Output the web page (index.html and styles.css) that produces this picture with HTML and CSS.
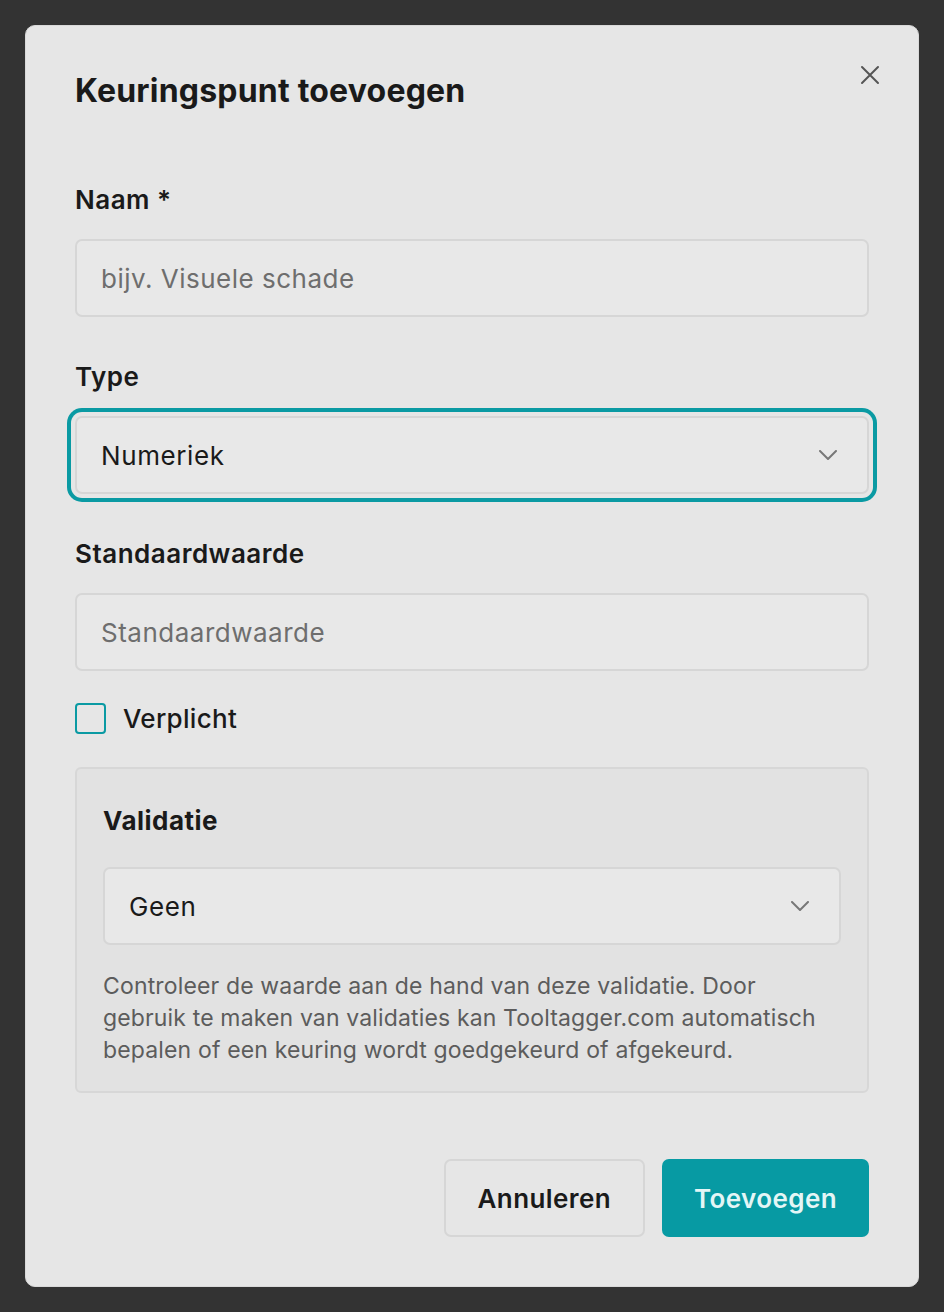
FILE: index.html
```html
<!DOCTYPE html>
<html lang="nl">
  <head>
    <meta charset="UTF-8" />
    <meta name="viewport" content="width=device-width, initial-scale=1.0" />
    <title>Keuringspunt toevoegen</title>
    <link rel="stylesheet" href="styles.css">
  </head>
  <body>
    <div class="overlay">
      <div class="modal">
        <div class="modal-header">
          <h2 class="modal-title">Keuringspunt toevoegen</h2>
          <button class="close" aria-label="Sluiten">
            <svg width="20" height="20" viewBox="0 0 20 20">
              <path d="M2 2 L18 18 M18 2 L2 18" stroke="#555" stroke-width="2" stroke-linecap="round" fill="none" />
            </svg>
          </button>
        </div>

        <div class="field">
          <label class="label" for="naam">Naam *</label>
          <input class="input" type="text" id="naam" placeholder="bijv. Visuele schade" />
        </div>

        <div class="field">
          <label class="label" for="type">Type</label>
          <div class="select focused">
            <span class="select-value">Numeriek</span>
            <svg class="chevron" width="18" height="10" viewBox="0 0 18 10">
              <path d="M1 1 L9 9 L17 1" stroke="#777" stroke-width="2" fill="none" stroke-linecap="round" stroke-linejoin="round" />
            </svg>
          </div>
        </div>

        <div class="field">
          <label class="label" for="standaard">Standaardwaarde</label>
          <input class="input" type="text" id="standaard" placeholder="Standaardwaarde" />
        </div>

        <label class="check-row">
          <span class="checkbox"></span>
          <span class="check-label">Verplicht</span>
        </label>

        <!-- Validatie blok -->
        <div class="panel">
          <div class="panel-title">Validatie</div>
          <div class="select">
            <span class="select-value">Geen</span>
            <svg class="chevron" width="18" height="10" viewBox="0 0 18 10">
              <path d="M1 1 L9 9 L17 1" stroke="#777" stroke-width="2" fill="none" stroke-linecap="round" stroke-linejoin="round" />
            </svg>
          </div>
          <p class="help">
            Controleer de waarde aan de hand van deze validatie. Door gebruik te maken van validaties kan Tooltagger.com automatisch bepalen of een keuring wordt goedgekeurd of afgekeurd.
          </p>
        </div>

        <div class="actions">
          <button class="btn btn-secondary">Annuleren</button>
          <button class="btn btn-primary">Toevoegen</button>
        </div>
      </div>
    </div>
  </body>
</html>
```

FILE: styles.css
```css
* {
  box-sizing: border-box;
}
html,
body {
  margin: 0;
  height: 100%;
}
body {
  background-color: #333333;
  font-family: Inter, "Noto Sans", sans-serif;
  color: #1a1a1a;
}
.overlay {
  padding: 25px;
}
.modal {
  background-color: #e6e6e6;
  border: 1px solid #d9d9d9;
  border-radius: 10px;
  padding: 47px 49px 49px 49px;
  height: 1262px;
}
.modal-header {
  display: flex;
  justify-content: space-between;
  align-items: flex-start;
  margin-bottom: 75px;
}
.modal-title {
  margin: 0;
  font-size: 32px;
  line-height: 36px;
  font-weight: 700;
  letter-spacing: 0.2px;
}
.close {
  background: none;
  border: none;
  padding: 0;
  margin-top: -8px;
  margin-right: -11px;
  cursor: pointer;
  width: 20px;
  height: 20px;
}

/* Form fields */
.field {
  margin-bottom: 44px;
}
.label {
  display: block;
  font-size: 26px;
  line-height: 32px;
  font-weight: 600;
  margin-bottom: 23px;
  letter-spacing: 0.5px;
}
.input,
.select {
  display: flex;
  align-items: center;
  width: 100%;
  height: 78px;
  padding: 0 24px;
  background-color: #e8e8e8;
  border: 2px solid #d6d6d6;
  border-radius: 7px;
  font-family: inherit;
  font-size: 26px;
  letter-spacing: 0.5px;
  color: #1a1a1a;
  outline: none;
}
.input::placeholder {
  color: #6e6e6e;
}
.select {
  justify-content: space-between;
  padding-right: 30px;
}
.select.focused {
  box-shadow: 0 0 0 4px #e6e6e6, 0 0 0 8px #0a9aa3;
}
.select-value {
  font-size: 26px;
  letter-spacing: 0.6px;
}

/* Checkbox */
.check-row {
  display: flex;
  align-items: center;
  gap: 17px;
  margin-top: -12px;
  margin-bottom: 33px;
}
.checkbox {
  width: 31px;
  height: 31px;
  border: 2px solid #0a9aa3;
  border-radius: 4px;
}
.check-label {
  font-size: 26px;
  font-weight: 500;
  letter-spacing: 0.3px;
}

/* Validation panel */
.panel {
  background-color: #e2e2e2;
  border: 2px solid #d7d7d7;
  border-radius: 6px;
  padding: 36px 26px 25px 26px;
}
.panel-title {
  font-size: 26px;
  line-height: 32px;
  font-weight: 700;
  letter-spacing: 0.5px;
  margin-bottom: 30px;
}
.help {
  margin: 25px 0 0 0;
  font-size: 23px;
  line-height: 32px;
  letter-spacing: 0.15px;
  color: #5c5c5c;
}

/* Buttons */
.actions {
  display: flex;
  justify-content: flex-end;
  gap: 17px;
  margin-top: 66px;
}
.btn {
  height: 78px;
  padding: 0 32px;
  border-radius: 7px;
  font-family: inherit;
  font-size: 26px;
  font-weight: 600;
  letter-spacing: 0.4px;
  cursor: pointer;
}
.btn-secondary {
  background-color: #e6e6e6;
  border: 2px solid #d6d6d6;
  color: #1a1a1a;
}
.btn-primary {
  background-color: #079aa3;
  border: none;
  color: #e4f6f6;
}
```
